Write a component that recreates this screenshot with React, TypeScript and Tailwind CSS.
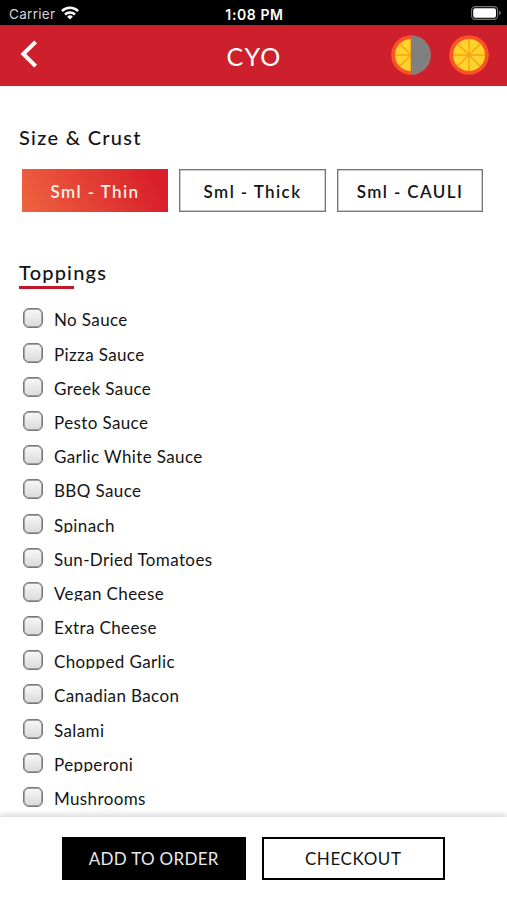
const sizes = ['Sml - Thin', 'Sml - Thick', 'Sml - CAULI'];

const toppings = [
  'No Sauce',
  'Pizza Sauce',
  'Greek Sauce',
  'Pesto Sauce',
  'Garlic White Sauce',
  'BBQ Sauce',
  'Spinach',
  'Sun-Dried Tomatoes',
  'Vegan Cheese',
  'Extra Cheese',
  'Chopped Garlic',
  'Canadian Bacon',
  'Salami',
  'Pepperoni',
  'Mushrooms',
];

function OrangeIcon({ half = false }: { half?: boolean }) {
  return (
    <svg viewBox="0 0 40 40" className="w-10 h-10">
      <circle cx="20" cy="20" r="19.8" fill="#fb5424" />
      <circle cx="20" cy="20" r="16" fill="#ffd42a" />
      <path d="M20 4v32M4 20h32M8.7 8.7l22.6 22.6M31.3 8.7L8.7 31.3" stroke="#f8a11b" strokeWidth="1.4" />
      {half && <path d="M20 .2a19.8 19.8 0 0 1 0 39.6z" fill="#808080" />}
    </svg>
  );
}

function StatusBar() {
  return (
    <div className="h-[25px] shrink-0 bg-black text-white grid grid-cols-3 items-center pt-[3px] pl-[9px] pr-[6px] font-['Inter',sans-serif] text-[13px]">
      <div className="flex items-center gap-[6px]">
        <span className="text-[#d4d4d4] text-[13.5px] tracking-[0.3px]">Carrier</span>
        <svg viewBox="0 0 18 14" className="w-[18px] h-[14px] -mt-[3px]" fill="none" stroke="white" strokeWidth="2.5">
          <path d="M.9 5.2a11.5 11.5 0 0 1 16.2 0" />
          <path d="M4 8.5a7.1 7.1 0 0 1 10 0" />
          <path d="M9 13.6l-2.8-2.9a4 4 0 0 1 5.6 0z" fill="white" stroke="none" />
        </svg>
      </div>
      <span className="text-center text-[14px] font-semibold tracking-[0.6px] -ml-px">1:08 PM</span>
      <svg viewBox="0 0 30 14" className="w-[30px] h-[14px] justify-self-end -mt-[3px]">
        <rect x=".6" y=".6" width="26" height="12.8" rx="3.6" fill="none" stroke="#777" strokeWidth="1.1" />
        <rect x="2.2" y="2.2" width="22.8" height="9.6" rx="2" fill="white" />
        <path d="M28 4.8q1.8.8 1.8 2.2T28 9.2z" fill="#777" />
      </svg>
    </div>
  );
}

function Header() {
  return (
    <header className="h-[61px] shrink-0 bg-[#cd202c] text-white grid grid-cols-3 items-center pl-[20px] pr-[18px]">
      <svg viewBox="0 0 18 28" className="w-[18px] h-[28px] -mt-[4px]" fill="none" stroke="white" strokeWidth="4">
        <path d="M15.6 1.8L3.3 14l12.3 12.2" />
      </svg>
      <h1 className="text-center text-[25px] tracking-[1.2px] pt-[2px] -ml-px">CYO</h1>
      <div className="flex justify-end gap-[18px] -mt-[2px]">
        <OrangeIcon half />
        <OrangeIcon />
      </div>
    </header>
  );
}

export default function App() {
  return (
    <div className="w-[507px] h-[900px] overflow-hidden bg-white text-[#141414] flex flex-col font-['Lato',sans-serif]">
      <StatusBar />
      <Header />

      <main className="flex-1 min-h-0 overflow-hidden px-[19px] pt-[39px]">
        <h2 className="text-[20px] leading-6 font-medium tracking-[1.3px]">Size &amp; Crust</h2>
        <div className="flex gap-[10.8px] mt-[20px] ml-[2.7px]">
          {sizes.map((size, i) => (
            <button
              key={size}
              className={
                i === 0
                  ? 'w-[146.7px] h-[43px] pt-[3px] text-[17px] font-semibold tracking-[1.4px] text-[#fff0e8] bg-linear-[65deg,#ee6441,#d91f2a_90%]'
                  : 'w-[146.7px] h-[43px] pt-[3px] text-[17px] font-semibold tracking-[1.4px] border border-[#777] shadow-[inset_0_0_0_0.5px_#999]'
              }
            >
              {size}
            </button>
          ))}
        </div>

        <h2 className="mt-[48px] text-[20px] leading-6 font-medium tracking-[1.2px]">Toppings</h2>
        {/* short accent under the heading */}
        <div className="mt-[2px] w-[55px] h-[3px] bg-[#c4172a]"></div>

        <ul className="mt-[12.3px]">
          {toppings.map((name) => (
            <li key={name} className="h-[34.2px] flex items-center pl-[4px]">
              <span className="size-5 rounded-[6px] border border-[#777] shadow-[inset_0_0_0_0.7px_#888] bg-linear-to-b from-[#f8f8f8] to-[#dadada]"></span>
              <span className="ml-[11px] -mt-[2px] h-[20px] leading-[25px] overflow-hidden text-[17px] tracking-[0.38px]">{name}</span>
            </li>
          ))}
        </ul>
      </main>

      <footer className="relative h-[83px] shrink-0 bg-white shadow-[0_-3px_5px_rgba(0,0,0,0.14)] flex justify-center gap-[16px] pt-[20px]">
        <button className="w-[183.5px] h-[43px] bg-black text-[#e8e8e8] text-[17px] tracking-[0.3px]">ADD TO ORDER</button>
        <button className="w-[183.5px] h-[43px] border-2 border-black text-[17px] tracking-[0.6px]">CHECKOUT</button>
      </footer>
    </div>
  );
}
